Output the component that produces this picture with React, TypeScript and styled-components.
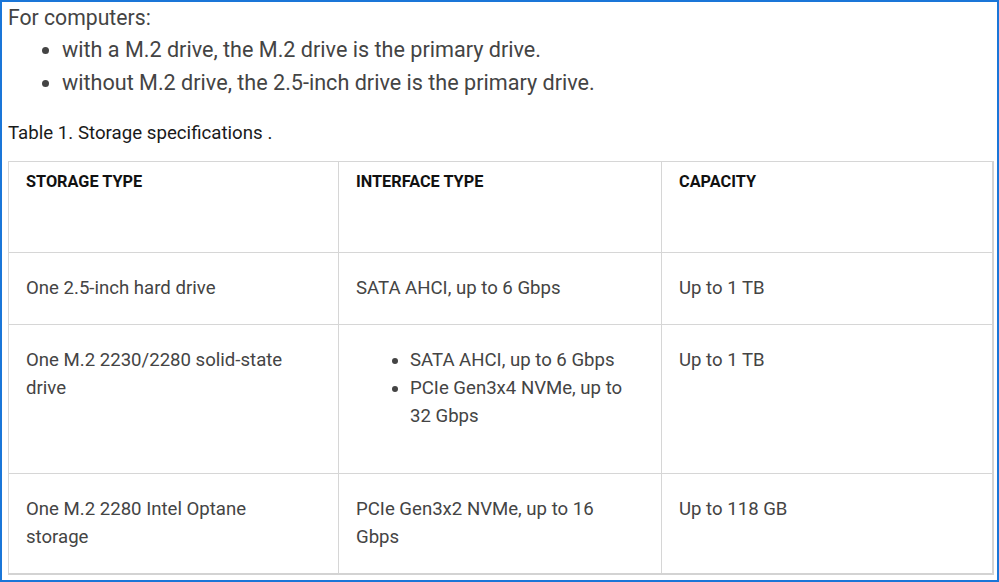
import React from "react";
import styled, { createGlobalStyle } from "styled-components";

const Global = createGlobalStyle`
  html, body { margin: 0; padding: 0; background: #fff; }
  body { font-family: Roboto, "Noto Sans", Arial, sans-serif; }
`;

const Frame = styled.div`
  width: 999px;
  height: 582px;
  box-sizing: border-box;
  border: 2px solid #1a76d8;
  padding: 0 6px 0 6px;
  overflow: hidden;
  background: #fff;
`;

const Lead = styled.p`
  margin: 0;
  font-size: 21.2px;
  line-height: 31px;
  color: #444;
`;

const TopList = styled.ul`
  margin: 0;
  padding-left: 54px;
  color: #444;
  font-size: 21.6px;
  line-height: 33px;
`;

const Caption = styled.p`
  margin: 22px 0 0 0;
  font-size: 18.7px;
  line-height: 24px;
  color: #1a1a1a;
`;

const Table = styled.table`
  margin-top: 16px;
  width: 984px;
  border-collapse: collapse;
  table-layout: fixed;
  border-right: 2px solid #d3d3d3;
  border-bottom: 2px solid #d3d3d3;
`;

const Col = styled.col<{ $w: number }>`
  width: ${(p) => p.$w}px;
`;

const Th = styled.th`
  border: 1px solid #d6d6d6;
  text-align: left;
  vertical-align: top;
  padding: 10px 34px 0 17px;
  height: 80px;
  font-size: 16.3px;
  line-height: 20px;
  font-weight: 700;
  color: #111;
  text-transform: uppercase;
`;

const Td = styled.td`
  border: 1px solid #d6d6d6;
  vertical-align: top;
  padding: 21px 34px 22px 17px;
  font-size: 18.6px;
  line-height: 28px;
  color: #444;
`;

const CellList = styled.ul`
  margin: 0 0 21px 0;
  padding-left: 54px;
`;

export default function App() {
  return (
    <>
      <Global />
      <Frame>
        <Lead>For computers:</Lead>
        <TopList>
          <li>with a M.2 drive, the M.2 drive is the primary drive.</li>
          <li>without M.2 drive, the 2.5-inch drive is the primary drive.</li>
        </TopList>
        <Caption>Table 1. Storage specifications .</Caption>
        <Table>
          <colgroup>
            <Col $w={330} />
            <Col $w={323} />
            <Col $w={331} />
          </colgroup>
          <thead>
            <tr>
              <Th>Storage Type</Th>
              <Th>Interface Type</Th>
              <Th>Capacity</Th>
            </tr>
          </thead>
          <tbody>
            <tr>
              <Td>One 2.5-inch hard drive</Td>
              <Td>SATA AHCI, up to 6 Gbps</Td>
              <Td>Up to 1 TB</Td>
            </tr>
            <tr>
              <Td>One M.2 2230/2280 solid-state drive</Td>
              <Td>
                <CellList>
                  <li>SATA AHCI, up to 6 Gbps</li>
                  <li>PCIe Gen3x4 NVMe, up to 32 Gbps</li>
                </CellList>
              </Td>
              <Td>Up to 1 TB</Td>
            </tr>
            <tr>
              <Td>One M.2 2280 Intel Optane storage</Td>
              <Td>PCIe Gen3x2 NVMe, up to 16 Gbps</Td>
              <Td>Up to 118 GB</Td>
            </tr>
          </tbody>
        </Table>
      </Frame>
    </>
  );
}
